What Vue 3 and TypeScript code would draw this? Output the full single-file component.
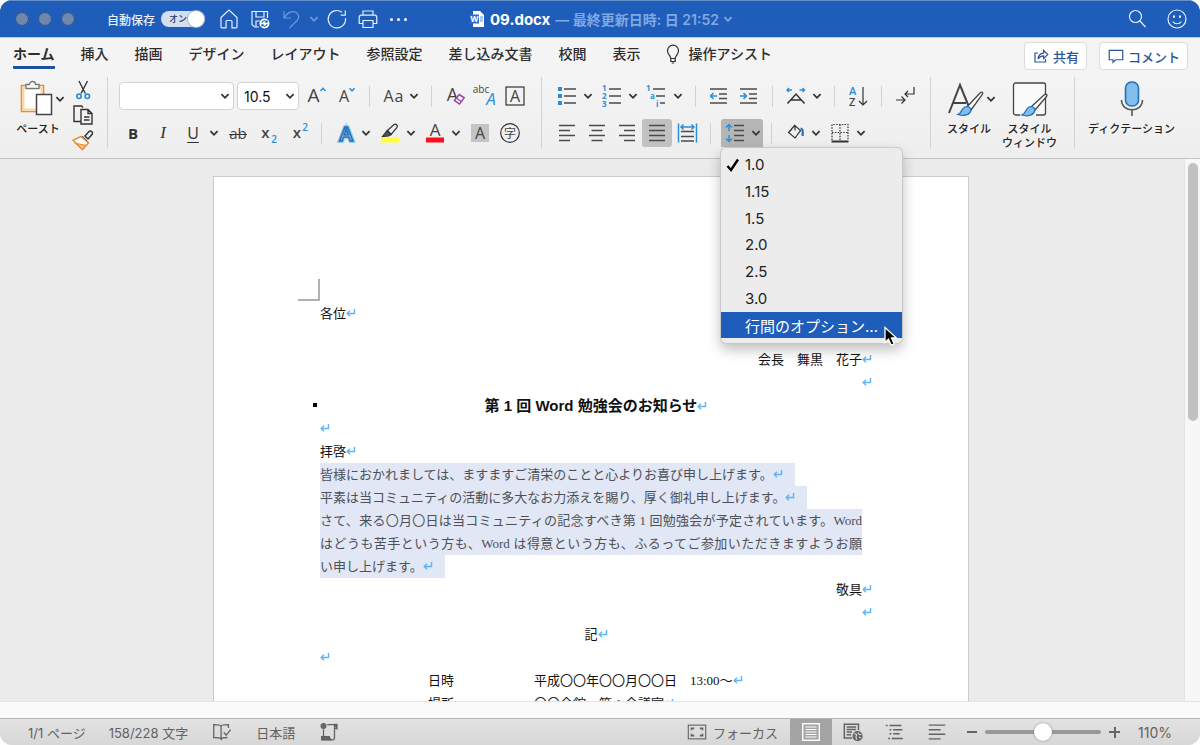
<script setup lang="ts">
import { h, ref } from 'vue'

const blue = '#2b8fd6'
const lines = (xs: [number, number, number][], color = '#4a4a4a') =>
  xs.map(([x1, x2, y]) => `<path d="M${x1} ${y}H${x2}" stroke="${color}" stroke-width="1.5"/>`).join('')
const letter = (t: string, x: number, y: number, size: number, extra = '') =>
  `<text x="${x}" y="${y}" font-size="${size}" text-anchor="middle" fill="#444" stroke="none" font-family="Open Sans, Noto Sans, sans-serif" ${extra}>${t}</text>`

const icons: Record<string, string> = {
  home: '<path d="M4 10.5 12 3l8 7.500V20a.8.8 0 0 1-.8.8H15V14.500a1 1 0 0 0-1-1h-4a1 1 0 0 0-1 1v6.300H4.800A.8.8 0 0 1 4 20Z"/>',
  save: '<path d="M11 20H6.500L4 17.500V4.500h15.500V11M8 4.500v5.500h8V4.500M8 20v-6h4"/><circle cx="16.500" cy="16.500" r="5" fill="#fff" stroke="none"/><path d="M13.800 15.800a2.800 2.800 0 0 1 5-.8m.3-1.500v1.800h-1.800M19.200 17.200a2.800 2.800 0 0 1-5 .8m-.3 1.500v-1.800h1.800" stroke="#1f5dba" stroke-width="1.100"/>',
  undo: '<path d="M5 4v7h7M5.500 10.500C9 4.500 15 3 18 6.200c2.300 2.500 2 5.300-.2 7.600L10.500 21"/>',
  redo: '<path d="M17 5.200A8.700 8.700 0 1 0 20.500 11M20.300 3.500v4.700h-4.600"/>',
  print: '<path d="M7 8V4h10v4M7 16.500H3.200V10.500a2.300 2.300 0 0 1 2.300-2.300h13a2.300 2.300 0 0 1 2.300 2.300v6H17M7 13.500h10v7H7Z"/>',
  search: '<circle cx="10.500" cy="9.500" r="6"/><path d="m15 14 5.500 6"/>',
  smile: '<circle cx="12" cy="12" r="9"/><path d="M7.800 14.500c1.800 3 6.600 3 8.400 0"/><path d="M9 8.500v2.200M15 8.500v2.200" stroke-width="2"/>',
  bulb: '<path d="M9.800 16.500c0-2.500-3.300-4-3.300-7.800a5.500 5.500 0 0 1 11 0c0 3.800-3.300 5.300-3.300 7.800ZM9.800 16.500v3h4.400v-3M10.800 21h2.400"/>',
  share: '<path d="M8 8H4v12h14v-4"/><path d="M8 16c.5-5 3-7.500 7.500-7.800V4.500L21 10l-5.500 5.500v-3.700C12 11.800 10 13 8 16Z"/>',
  comment: '<path d="M3 4.500h18v12.500h-9.500L8 20.500V17H3Z"/>',
  cut: `<path d="M8 3l6.300 12.500M16.500 3 10 15.500" stroke-width="1.400"/><g stroke="${blue}" stroke-width="1.700"><circle cx="8" cy="18.300" r="2.200"/><circle cx="16.300" cy="18.300" r="2.200"/></g>`,
  copy: '<path d="M9.500 18.500H3V3h7.500l1.500 1.500M10 6.500h7l4 4V21H10ZM17 6.500v4h4M13 14h5.500M13 17h5.500" stroke-width="1.400"/>',
  brush: '<path d="m11 8.500 6 6M14 8l4-4.500c1.500-1.500 4.500 1 3.200 2.800L17 11Z" stroke-width="1.500"/><path d="m10 8.500-8 3.800 9.500 9.200 6-6.500Z" fill="#fff" stroke="#e98b37" stroke-width="1.400"/><path d="m5 15.500 6.500 6 3.500-4Z" fill="#fbc97c" stroke="#e98b37"/>',
  grow: letter('A', 9.500, 18, 19) + `<path d="m16.500 7 2.500-2.700L21.500 7" stroke="${blue}" stroke-width="1.500"/>`,
  shrink: letter('A', 10, 18, 16) + `<path d="M15.500 4.200 18 6.800l2.500-2.600" stroke="${blue}" stroke-width="1.500"/>`,
  aa: letter('A', 7.500, 18, 16) + letter('a', 18, 18, 16),
  clear: letter('A', 9.500, 17, 18) + '<path d="m11.500 16.500 4.700-6 5 3.300-4.700 6.200Z" fill="#fff" stroke="#a23fb0" stroke-width="1.500"/><path d="m13.500 14 4.800 3.400" stroke="#a23fb0"/>',
  abc: letter('abc', 8, 9, 10) + `<text x="18" y="21" font-size="17" font-style="italic" text-anchor="middle" fill="${blue}" stroke="none" font-family="Open Sans, sans-serif">A</text>`,
  boxed: '<rect x="3" y="3" width="18" height="18"/>' + letter('A', 12, 18, 16),
  strike: letter('ab', 12, 18, 15) + '<path d="M3 13.500h18"/>',
  sub: letter('x', 9.500, 17, 15, 'font-weight="600"') + `<text x="18" y="21.500" font-size="10" font-weight="600" text-anchor="middle" fill="${blue}" stroke="none">2</text>`,
  sup: letter('x', 11, 17, 15, 'font-weight="600"') + `<text x="19" y="10" font-size="10" font-weight="600" text-anchor="middle" fill="${blue}" stroke="none">2</text>`,
  effect: '<text x="13" y="19.500" font-size="20" font-weight="600" text-anchor="middle" fill="#fff" stroke="#9bcdf0" stroke-width="4" font-family="Open Sans, sans-serif">A</text><text x="13" y="19.500" font-size="20" font-weight="600" text-anchor="middle" fill="#fff" stroke="#2372b9" stroke-width="1.700" font-family="Open Sans, sans-serif" aria-hidden="true">A</text>',
  marker: '<path d="M3 16.500h18v5H3Z" fill="#ffff3c" stroke="none"/><path d="m9.500 9.500 6.500-6c1.800-1.300 4.300.9 3 2.800l-6 7.200Z"/><path d="m9.300 9.500 3.700 4-2.500 1.500-6 .5Z" fill="#555"/>',
  color: letter('A', 12, 15, 17) + '<path d="M3 16.500h18v5H3Z" fill="#fb0d1b" stroke="none"/>',
  shade: '<path d="M3 3h18v18H3Z" fill="#c4c4c4" stroke="none"/>' + letter('A', 12, 18, 16),
  circled: '<circle cx="12" cy="12" r="9.300"/><text x="12" y="16.500" font-size="12" text-anchor="middle" fill="#444" stroke="none" font-family="Noto Sans CJK JP">字</text>',
  bullets: `<path d="M3 3h4v4H3ZM3 10h4v4H3ZM3 17h4v4H3Z" fill="${blue}" stroke="none"/>` + lines([[9, 21, 5], [9, 21, 12], [9, 21, 19]]),
  numbers: `<g fill="${blue}" stroke="none" font-size="8" font-weight="700" font-family="Open Sans, sans-serif"><text x="2" y="7">1</text><text x="2" y="15">2</text><text x="2" y="23">3</text></g>` + lines([[9, 21, 5], [9, 21, 12], [9, 21, 19]]),
  levels: `<g fill="${blue}" stroke="none" font-size="8" font-weight="700" font-family="Open Sans, sans-serif"><text x="1" y="7">1</text><text x="5" y="15">a</text><text x="11" y="23">i</text></g>` + lines([[8, 20, 5], [11, 20, 12], [15, 20, 19]]),
  outdent: lines([[3, 20, 5], [12, 20, 10], [12, 20, 14.500], [3, 20, 19]]) + `<path d="M10 12H4m2.500-3-3 3 3 3" stroke="${blue}" stroke-width="1.500"/>`,
  indent: lines([[3, 20, 5], [12, 20, 10], [12, 20, 14.500], [3, 20, 19]]) + `<path d="M3 12h6M6.500 9l3 3-3 3" stroke="${blue}" stroke-width="1.500"/>`,
  cjk: `<path d="m3.500 19.500 8.500-9.500 8.500 9.500M7 16h10" stroke-width="1.500"/><path d="M3 6h5M5 4 3 6l2 2M15.500 6h5m-2-2 2 2-2 2" stroke="${blue}" stroke-width="1.400"/>`,
  sort: `<text x="3" y="11" font-size="11" font-weight="600" fill="${blue}" stroke="none" font-family="Open Sans, sans-serif">A</text><text x="3" y="22" font-size="11" font-weight="600" fill="#444" stroke="none" font-family="Open Sans, sans-serif">Z</text><path d="M17 3v18m-4-4 4 4 4-4"/>`,
  marks: '<path d="M21 3v7h-9m3-3-3 3 3 3M3 16h9m-3.500-3.500L12 16l-3.500 3.500"/>',
  left: lines([[4, 20, 4.500], [4, 15, 9.500], [4, 20, 14.500], [4, 15, 19.500]]),
  center: lines([[4, 20, 4.500], [6.500, 17.500, 9.500], [4, 20, 14.500], [6.500, 17.500, 19.500]]),
  right: lines([[4, 20, 4.500], [9, 20, 9.500], [4, 20, 14.500], [9, 20, 19.500]]),
  justify: lines([[4, 20, 4.500], [4, 20, 9.500], [4, 20, 14.500], [4, 20, 19.500]]),
  distribute: lines([[6, 19, 10.500], [6, 19, 15.500], [6, 19, 20]]) + `<path d="M3.500 2.500v19M21.500 2.500v19M6 6h13M8.500 3.500 6 6l2.500 2.500m8-5L19 6l-2.500 2.500" stroke="${blue}" stroke-width="1.500"/>`,
  spacing: lines([[11, 21, 4.500], [11, 21, 9.500], [11, 21, 14.500], [11, 21, 19.500]]) + `<path d="M6 4v6M3 6.500 6 3.500l3 3M6 14v6m-3-2.500 3 3 3-3" stroke="${blue}" stroke-width="1.500"/>`,
  bucket: '<path d="m12 4-6.500 7.500 6.500 5.500 5.500-7.500L12 4.500v5M5.500 11.500 9 8"/><path d="M17.500 7.500c2.500 0 2.300 2.500 2.200 7.500" stroke="#2372b9" stroke-width="2.200"/>',
  borders: '<path d="M4 19V3.500h16V19M12 3.500V20M4 11.500h16" stroke-dasharray="1.500 1.300"/><path d="M3.500 20.500h17" stroke-width="2"/>',
  proof: '<path d="M11 19.500V5.500C10 4 8 4 3 4v14c5 0 7 0 8 1.500ZM11 5.500c1-1.500 3-1.500 8-1.500v3.500M11 19.500c1-1.300 3-1.500 7-1.500M14 12.500l2.500 3 5-6" stroke-width="1.400"/>',
  macro: '<circle cx="6" cy="5.500" r="3.300" fill="#666" stroke="none"/><path d="M10 4h10.500v4H18M18 4v14c0 2-1 2.500-2 2.500H4V17h8c0 2 1 3.500 3 3.500M6 9v8" stroke-width="1.400"/><path d="M4 17h8l2 3.500H4ZM18 3.500h2.500V8Z" fill="#666"/>',
  focus: '<rect x="2.500" y="4.500" width="19" height="15"/><path d="M6 10V8h3M15 8h3v2M18 14v2h-3M9 16H6v-2" stroke-width="1.800"/>',
  printView: '<rect x="3" y="3" width="18" height="18" stroke="#fff" stroke-width="1.500"/><path d="M6 6.500h12M6 9.200h12M6 12h12M6 14.800h12M6 17.500h12" stroke="#fff"/>',
  webView: '<path d="M11 18.500H2.500V3.500H18V10M5 6.500h10.500M5 9.200h10.500M5 12h6M5 15h5" stroke-width="1.600"/><circle cx="17" cy="16.500" r="5.500" fill="#666" stroke="none"/><path d="M13.500 14c2 0 3 1 2 2.500s1 2 0 4M17.500 12.500l1 2 2.500.5M18.500 17.500l2 1" stroke="#ddd"/>',
  outline: '<path d="M2 5h2M6 5h13M6 9.500h2M10 9.500h10M6 14h2M10 14h7M4.500 19h2M8.500 19h12" stroke-width="1.600"/>',
  draft: '<path d="M3 4.500h18M3 9.500h13M3 14.500h18M3 19.500h13" stroke-width="1.600"/>',
}

const Icon = (props: { name: string }) =>
  h('svg', {
    class: 'icon', viewBox: '0 0 24 24', 'aria-hidden': 'true', fill: 'none',
    stroke: 'currentColor', 'stroke-width': '1.2', innerHTML: icons[props.name],
  })
Icon.props = ['name']

const Chev = () =>
  h('svg', { class: 'chev', viewBox: '0 0 10 10', fill: 'none', stroke: 'currentColor', 'stroke-width': '1.5', 'aria-hidden': 'true' },
    [h('path', { d: 'M2 3.500 5 6.500 8 3.500' })])

const Ret = () =>
  h('span', { class: 'ret' }, [
    h('svg', { viewBox: '0 0 10 10', fill: 'none', stroke: '#5fb3f8', 'stroke-width': '1.4', 'aria-hidden': 'true' },
      [h('path', { d: 'M8.500 1v4.500H1M4 2.800 1.200 5.500 4 8.200' })]),
  ])

const autosave = ref(true)
const zoom = ref(50)
const tabs = ['ホーム', '挿入', '描画', 'デザイン', 'レイアウト', '参照設定', '差し込み文書', '校閲', '表示']
const spacings = ['1.0', '1.15', '1.5', '2.0', '2.5', '3.0']
const current = ref('1.0')

type Tool = { icon?: string; label?: string; menu?: boolean; sep?: boolean; text?: string; on?: boolean }
const fontTop: Tool[] = [
  { icon: 'grow', label: 'フォント サイズの拡大' }, { icon: 'shrink', label: 'フォント サイズの縮小' }, { sep: true },
  { icon: 'aa', label: '文字種の変換', menu: true }, { sep: true },
  { icon: 'clear', label: '書式のクリア' }, { icon: 'abc', label: 'ルビ' }, { icon: 'boxed', label: '囲み線' },
]
const fontBottom: Tool[] = [
  { text: 'B', label: '太字' }, { text: 'I', label: '斜体' }, { text: 'U', label: '下線', menu: true },
  { icon: 'strike', label: '取り消し線' }, { icon: 'sub', label: '下付き' }, { icon: 'sup', label: '上付き' }, { sep: true },
  { icon: 'effect', label: '文字の効果', menu: true }, { icon: 'marker', label: '蛍光ペン', menu: true },
  { icon: 'color', label: 'フォントの色', menu: true }, { icon: 'shade', label: '文字の網かけ' }, { icon: 'circled', label: '囲い文字' },
]
const paraTop: Tool[] = [
  { icon: 'bullets', label: '箇条書き', menu: true }, { icon: 'numbers', label: '段落番号', menu: true },
  { icon: 'levels', label: 'アウトライン', menu: true }, { sep: true },
  { icon: 'outdent', label: 'インデント解除' }, { icon: 'indent', label: 'インデント' }, { sep: true },
  { icon: 'cjk', label: '拡張書式', menu: true }, { sep: true }, { icon: 'sort', label: '並べ替え' }, { sep: true },
  { icon: 'marks', label: '編集記号' },
]
const paraBottom: Tool[] = [
  { icon: 'left', label: '左揃え' }, { icon: 'center', label: '中央揃え' }, { icon: 'right', label: '右揃え' },
  { icon: 'justify', label: '両端揃え', on: true }, { icon: 'distribute', label: '均等割り付け' }, { sep: true },
]
const paraEnd: Tool[] = [
  { sep: true }, { icon: 'bucket', label: '塗りつぶし', menu: true }, { icon: 'borders', label: '罫線', menu: true },
]

const Tools = (props: { items: Tool[] }) =>
  props.items.flatMap((t) => {
    if (t.sep) return [h('span', { class: 'sep' })]
    const out = [h('button', { class: ['tool', t.on && 'on', t.text && 'txt-' + t.text], 'aria-label': t.label, type: 'button' },
      t.text ? t.text : [h(Icon, { name: t.icon as string })])]
    if (t.menu) out.push(h('button', { class: 'drop', type: 'button', 'aria-label': t.label + 'のメニュー' }, [h(Chev)]))
    return out
  })
Tools.props = ['items']
</script>

<template>
  <div class="window">
    <header class="titlebar">
      <div class="side">
        <span class="lights"><i></i><i></i><i></i></span>
        <label class="autosave">自動保存
          <span class="switch"><input v-model="autosave" type="checkbox" /><span>オン</span></span>
        </label>
        <div class="quick">
          <button type="button" aria-label="ホーム"><Icon name="home" /></button>
          <button type="button" aria-label="保存"><Icon name="save" /></button>
          <button type="button" aria-label="元に戻す" class="dim"><Icon name="undo" /></button>
          <button type="button" aria-label="履歴" class="dim narrow"><Chev /></button>
          <button type="button" aria-label="やり直し"><Icon name="redo" /></button>
          <button type="button" aria-label="印刷"><Icon name="print" /></button>
          <button type="button" aria-label="その他" class="dots"><i></i><i></i><i></i></button>
        </div>
      </div>
      <div class="doc-title">
        <svg class="doc-icon" viewBox="0 0 16 18" aria-hidden="true">
          <path d="M4 1h7l4 4v12H4Z" fill="#fff" />
          <path d="M11 7h3M11 9h3M11 11h3" stroke="#5b9be0" />
          <path d="M1 4.500h9v9H1Z" fill="#2d6bc4" />
          <text x="5.500" y="12" text-anchor="middle" font-size="8" font-weight="700" fill="#fff">W</text>
        </svg>
        <strong>09.docx</strong><span class="edited">— 最終更新日時: 日 21:52</span><Chev />
      </div>
      <div class="side end">
        <button type="button" aria-label="検索"><Icon name="search" /></button>
        <button type="button" aria-label="フィードバック"><Icon name="smile" /></button>
      </div>
    </header>

    <nav class="tabs">
      <a v-for="(t, i) in tabs" :key="t" href="#" :class="{ active: i === 0 }">{{ t }}</a>
      <a href="#" class="assist"><Icon name="bulb" />操作アシスト</a>
      <div class="actions">
        <button type="button"><Icon name="share" />共有</button>
        <button type="button"><Icon name="comment" />コメント</button>
      </div>
    </nav>

    <section class="ribbon">
      <div class="group clip">
        <button type="button" class="big">
          <span class="face">
            <svg width="38" height="38" viewBox="0 0 38 38" fill="none" aria-hidden="true">
              <path d="M2.500 5.500h22v26h-22Z" fill="#fff" stroke="#e98b37" stroke-width="1.600" />
              <path d="M4.500 7.500h18v22h-18Z" stroke="#fbd79b" stroke-width="2" />
              <path d="M7 8.500V4.500h3.500a3 3 0 0 1 6 0H20v4Z" fill="#fff" stroke="#777" stroke-width="1.300" />
              <path d="M17.500 14.500h15v20h-15Z" fill="#fff" stroke="#444" stroke-width="1.500" />
            </svg>
          </span>
          ペースト
        </button>
        <button type="button" class="drop tall" aria-label="貼り付けのオプション"><Chev /></button>
        <div class="stack">
          <button type="button" aria-label="切り取り"><Icon name="cut" /></button>
          <button type="button" aria-label="コピー"><Icon name="copy" /></button>
          <button type="button" aria-label="書式のコピー"><Icon name="brush" /></button>
        </div>
      </div>

      <div class="group rows font">
        <div class="row">
          <span class="pick name"><select aria-label="フォント"><option></option></select><Chev /></span>
          <span class="pick size"><select aria-label="フォント サイズ"><option>10.5</option></select><Chev /></span>
          <Tools :items="fontTop" />
        </div>
        <div class="row"><Tools :items="fontBottom" /></div>
      </div>

      <div class="group rows para">
        <div class="row"><Tools :items="paraTop" /></div>
        <div class="row">
          <Tools :items="paraBottom" />
          <div class="spacing">
            <button type="button" class="spacing-button" aria-label="行間"><Icon name="spacing" /><Chev /></button>
            <div class="menu" role="menu">
              <button v-for="s in spacings" :key="s" type="button" role="menuitem" @click="current = s">
                <span class="tick"><svg v-if="s === current" width="14" height="14" viewBox="0 0 14 14" fill="none" stroke="#000" stroke-width="2.400" aria-hidden="true"><path d="M1.500 8 5 12 12 1.500" /></svg></span>{{ s }}
              </button>
              <button type="button" role="menuitem" class="hot"><span class="tick"></span>行間のオプション…</button>
              <svg class="pointer" width="16" height="22" viewBox="0 0 16 22" aria-hidden="true">
                <path d="M2 1.500v15l3.500-3.300 2.700 6 3-1.300-2.700-5.900H13.500Z" fill="#000" stroke="#fff" stroke-width="1.300" />
              </svg>
            </div>
          </div>
          <Tools :items="paraEnd" />
        </div>
      </div>

      <div class="group styles">
        <button type="button" class="big">
          <span class="face">
            <svg width="44" height="38" viewBox="0 0 44 38" fill="none" aria-hidden="true">
              <path d="M2 33 13 5l9 22M6 23h13" stroke="#444" stroke-width="2" />
              <path d="m20 27 13-14c2-1.800 3.500-.5 2.300 1.500L24 30Z" fill="#fff" stroke="#444" stroke-width="1.300" />
              <path d="M24 30c-1 5-7 6.500-13 4.500 4-1 3-6 7-7.500 3-1 5.500 0 6 3Z" fill="#83bdeb" stroke="#2372b9" stroke-width="1.300" />
            </svg>
          </span>
          スタイル
        </button>
        <button type="button" class="drop tall" aria-label="スタイルの一覧"><Chev /></button>
        <button type="button" class="big">
          <span class="face">
            <svg width="38" height="38" viewBox="0 0 38 38" fill="none" aria-hidden="true">
              <path d="M9 35H4.500a2 2 0 0 1-2-2V5a2 2 0 0 1 2-2h28a2 2 0 0 1 2 2v28a2 2 0 0 1-2 2H25" fill="#fafafa" stroke="#444" stroke-width="1.300" />
              <path d="m20 27 13-12c2-1.500 4-.3 2.500 1.500L24 30Z" fill="#fff" stroke="#444" stroke-width="1.300" />
              <path d="M24 30c-1 5-7 7-13 5 4-1 3-6 7-8 3-1 5.500 0 6 3Z" fill="#83bdeb" stroke="#2372b9" stroke-width="1.300" />
            </svg>
          </span>
          スタイル<br />ウィンドウ
        </button>
      </div>

      <div class="group dictate">
        <button type="button" class="big">
          <span class="face">
            <svg width="30" height="38" viewBox="0 0 30 38" fill="none" aria-hidden="true">
              <rect x="8.500" y="2" width="13" height="24" rx="6" fill="#83bdeb" stroke="#2372b9" stroke-width="1.600" />
              <path d="M4.500 20c0 13 21 13 21 0M15 29.500V36" stroke="#555" stroke-width="1.600" />
            </svg>
          </span>
          ディクテーション
        </button>
      </div>
    </section>

    <main class="canvas">
      <div class="view">
        <article class="page">
          <div class="corner"></div>
          <p>各位<Ret /></p>
          <p></p>
          <p class="r">会長　舞黒　花子<Ret /></p>
          <p class="r"><Ret /></p>
          <h1>第 1 回 Word 勉強会のお知らせ<Ret /></h1>
          <p><Ret /></p>
          <p>拝啓<Ret /></p>
          <p class="sel">皆様におかれましては、ますますご清栄のことと心よりお喜び申し上げます。<Ret /></p>
          <p class="sel">平素は当コミュニティの活動に多大なお力添えを賜り、厚く御礼申し上げます。<Ret /></p>
          <p class="sel full">さて、来る〇月〇日は当コミュニティの記念すべき第 1 回勉強会が予定されています。Word</p>
          <p class="sel full">はどうも苦手という方も、Word は得意という方も、ふるってご参加いただきますようお願</p>
          <p class="sel">い申し上げます。<Ret /></p>
          <p class="r">敬具<Ret /></p>
          <p class="r low"><Ret /></p>
          <p class="c">記<Ret /></p>
          <p><Ret /></p>
          <p class="item"><span>日時</span>平成〇〇年〇〇月〇〇日　13:00～<Ret /></p>
          <p class="item"><span>場所</span>〇〇会館　第 1 会議室<Ret /></p>
        </article>
      </div>
      <div class="scroll"><span></span></div>
    </main>
    <div class="hscroll"></div>

    <footer class="status">
      <span>1/1 ページ</span>
      <span>158/228 文字</span>
      <button type="button" aria-label="文章校正"><Icon name="proof" /></button>
      <span>日本語</span>
      <button type="button" aria-label="マクロ"><Icon name="macro" /></button>
      <div class="right">
        <button type="button" class="focus"><Icon name="focus" />フォーカス</button>
        <button type="button" class="view-mode picked" aria-label="印刷レイアウト"><Icon name="printView" /></button>
        <button type="button" class="view-mode" aria-label="Web レイアウト"><Icon name="webView" /></button>
        <button type="button" class="view-mode" aria-label="アウトライン"><Icon name="outline" /></button>
        <button type="button" class="view-mode" aria-label="下書き"><Icon name="draft" /></button>
        <button type="button" class="step minus" aria-label="縮小"></button>
        <input v-model="zoom" type="range" aria-label="ズーム" />
        <button type="button" class="step plus" aria-label="拡大"></button>
        <span class="percent">110%</span>
      </div>
    </footer>
  </div>
</template>

<style>
body { background: #fff; }
button, select, input { font: inherit; color: inherit; margin: 0; }
button { border: 0; padding: 0; background: none; display: inline-flex; align-items: center; justify-content: center; white-space: nowrap; }
.icon { width: 24px; height: 24px; flex: none; display: block; overflow: visible; font-weight: 400; }
.chev { width: 12px; height: 12px; flex: none; display: block; }
.ret { display: inline-block; width: 0; white-space: nowrap; }
.ret svg { width: 10px; height: 10px; overflow: visible; }
.tool { width: 30px; height: 28px; flex: none; font: 700 15px "Open Sans", sans-serif; }
.tool.on { background: #c1c1c1; border-radius: 3px; }
.tool.txt-I { font: italic 400 17px "Liberation Serif", serif; }
.tool.txt-U { font-size: 16px; font-weight: 400; text-decoration: underline; text-underline-offset: 3px; }
.drop { width: 15px; height: 28px; flex: none; justify-content: flex-start; }
.sep { width: 1px; height: 21px; margin: 0 8px; flex: none; background: #d2d2d2; }
</style>

<style scoped>
.window {
  height: 100vh;
  display: flex;
  flex-direction: column;
  overflow: hidden;
  border-radius: 12px;
  background: #ebebeb;
  color: #333;
  font-family: Inter, "Noto Sans CJK JP", sans-serif;
  font-size: 14px;
}
.titlebar {
  height: 38px;
  flex: none;
  box-sizing: border-box;
  border-top: 1px solid #6590cb;
  border-bottom: 1px solid #b5cdf0;
  background: #1f5dba;
  color: #e6effb;
  display: flex;
  align-items: center;
}
.side { flex: 1 1 0; display: flex; align-items: center; }
.side.end { justify-content: flex-end; gap: 16px; padding-right: 11px; }
.lights { display: flex; gap: 9px; padding: 0 32px 0 15px; }
.lights i { width: 14px; height: 14px; border-radius: 50%; background: #6f86ad; box-shadow: 0 0 0 1px #2b528f inset; }
.autosave { display: flex; align-items: center; gap: 6px; font-size: 12px; font-weight: 500; white-space: nowrap; }
.switch { display: flex; width: 44px; height: 16px; position: relative; border-radius: 8px; background: #d3def0; color: #24406e; }
.switch span { font-size: 9px; line-height: 16px; padding-left: 8px; }
.switch input { appearance: none; position: absolute; right: 1px; top: 0; width: 16px; height: 16px; border-radius: 50%; background: #fff; box-shadow: 0 0 1px 1px #a9b5c9; }
.quick { display: flex; padding-left: 8px; }
.quick button { width: 31px; height: 24px; flex: none; }
.quick button.narrow { width: 15px; }
.quick .dim { color: #6d98d9; }
.quick button.dots { gap: 4px; }
.dots i { width: 3px; height: 3px; border-radius: 50%; background: #fff; }
.doc-title { display: flex; align-items: center; white-space: nowrap; font-weight: 600; padding-left: 14px; }
.doc-icon { width: 16px; height: 18px; margin-right: 5px; }
.doc-title strong { font-weight: 700; color: #fff; margin-right: 5px; font-size: 15px; }
.edited, .doc-title .chev { color: #80a9e2; }
.doc-title .chev { margin-left: 3px; }

.tabs {
  height: 37px;
  flex: none;
  display: flex;
  align-items: flex-start;
  gap: 26px;
  padding-left: 13px;
  background: #f5f4f4;
  font-weight: 500;
}
.tabs a { color: #2d2d2d; text-decoration: none; white-space: nowrap; height: 28px; line-height: 32px; border-bottom: 3px solid transparent; border-radius: 1px; }
.tabs a.active { font-weight: 700; border-color: #1f519b; }
.tabs .assist { display: flex; gap: 4px; margin-left: -6px; }
.assist .icon { margin-top: 4px; }
.actions { margin-left: auto; display: flex; gap: 12px; padding: 4px 12px 0 0; color: #2a549a; font-size: 13px; }
.actions button { height: 28px; padding: 0 7px; gap: 3px; border: 1px solid #dcdcdc; border-radius: 4px; background: #fff; font-weight: 500; }
.actions .icon { width: 18px; height: 18px; stroke-width: 1.600; }

.ribbon {
  flex: none;
  display: flex;
  height: 84px;
  box-sizing: border-box;
  padding: 2px 0 10px;
  border-bottom: 1px solid #c3c3c3;
  background: linear-gradient(#f4f4f4, #eeeeee);
  position: relative;
  z-index: 1;
}
.group { flex: none; display: flex; align-items: flex-start; box-sizing: border-box; border-right: 1px solid #d2d2d2; }
.rows { display: flex; flex-direction: column; gap: 9px; padding-top: 5px; }
.row { display: flex; align-items: center; height: 28px; }
.clip { width: 108px; padding-left: 16px; }
.font { width: 434px; padding-left: 10px; }
.para { width: 389px; padding-left: 10px; }
.styles { width: 144px; padding-left: 16px; }
.dictate { border-right: 0; padding-left: 13px; }
.big { display: flex; flex-direction: column; min-width: 44px; font-size: 11px; line-height: 14px; color: #222; font-weight: 500; }
.face { height: 38px; display: flex; margin: 3px 0 4px; }
.big + .drop { margin-left: -6px; }
.styles .drop + .big { margin-left: 2px; }
.tall { height: 44px; }
.stack { display: flex; flex-direction: column; gap: 5px; padding: 3px 0 0 6px; }
.stack button { width: 16px; height: 20px; }
.pick { display: inline-flex; align-items: center; position: relative; height: 28px; flex: none; }
.pick select { appearance: none; width: 100%; height: 28px; padding: 0 18px 0 6px; border: 1px solid #d3d3d3; border-radius: 4px; background: #fff; color: #111; font-size: 14px; }
.pick .chev { position: absolute; right: 3px; }
.name { width: 115px; margin: 0 3px 0 1px; }
.size { width: 62px; margin-right: 2px; }

.spacing { position: relative; margin-left: 2px; }
.spacing-button { width: 42px; height: 28px; background: #b5b5b5; border-radius: 3px 3px 0 0; gap: 3px; }
.menu {
  position: absolute;
  top: 100%;
  left: 0;
  width: 181px;
  height: 195px;
  display: grid;
  grid-auto-rows: 1fr;
  box-sizing: border-box;
  padding: 4px 0;
  border-radius: 5px;
  background: #ececec;
  box-shadow: 0 0 0 1px #c9c9c9, 0 6px 14px rgba(0, 0, 0, 0.28);
  color: #222;
  font-size: 15px;
}
.menu button { display: flex; justify-content: flex-start; width: 100%; }
.menu button.hot { background: #1f5dba; color: #fff; }
.tick { width: 19px; padding-left: 5px; display: flex; }
.pointer { position: absolute; right: 3px; bottom: -5px; }

.canvas { flex: 1 1 0; min-height: 0; display: flex; overflow: hidden; }
.view { flex: 1; padding: 17px 2px 0 0; overflow: hidden; }
.page {
  box-sizing: border-box;
  max-width: 756px;
  margin: 0 auto;
  padding: 102px 106px 0;
  border: 1px solid #cbcbcb;
  background: #fff;
  color: #111;
  font: 13px/23px "Liberation Serif", "Noto Sans CJK JP", serif;
}
.corner { width: 20px; height: 20px; margin: 0 0 1px -22px; border: solid #b0b0b0; border-width: 0 2px 2px 0; }
.page p { margin: 0; height: 23px; white-space: nowrap; }
.page .r { text-align: right; }
.page .c { text-align: center; }
.page .low { height: 22px; }
.page h1 { position: relative; margin: 0; text-align: center; font: 700 15px/23px "Liberation Sans", "Noto Sans CJK JP", sans-serif; }
.page h1::before { content: ""; position: absolute; left: -7px; top: 9px; width: 4px; height: 4px; background: #000; }
.page .sel { width: fit-content; padding-right: 22px; background: #e1e7f4; color: #4d5058; }
.page .sel.full { width: auto; padding: 0; text-align-last: justify; }
.page .item { padding-left: 108px; display: flex; }
.item > span:first-child { width: 106px; }
.scroll { width: 16px; background: #f7f7f7; border-left: 1px solid #e4e4e4; box-sizing: border-box; padding-top: 4px; }
.scroll span { display: block; width: 10px; height: 48%; margin: 0 auto; border-radius: 5px; background: #c1c1c1; }
.hscroll { height: 17px; flex: none; background: #fafafa; border-top: 1px solid #e4e4e4; box-sizing: border-box; }

.status {
  height: 27px;
  flex: none;
  box-sizing: border-box;
  display: flex;
  align-items: center;
  gap: 23px;
  padding-left: 28px;
  border-top: 1px solid #b4b4b4;
  background: linear-gradient(#e2e2e2, #d7d7d7);
  color: #626262;
  font-size: 13px;
  white-space: nowrap;
}
.status .icon { width: 22px; height: 22px; }
.right { margin-left: auto; display: flex; align-items: center; height: 100%; padding-right: 28px; }
.focus { gap: 5px; margin-right: 12px; }
.view-mode { width: 42px; height: 26px; }
.picked { background: #a4a4a4; }
.step { width: 11px; height: 11px; flex: none; }
.minus { background: linear-gradient(#666, #666) center / 10px 2px no-repeat; margin-left: 8px; }
.plus { background: linear-gradient(#666, #666) center / 11px 2px no-repeat, linear-gradient(#666, #666) center / 2px 11px no-repeat; }
.right input { appearance: none; width: 116px; height: 4px; margin: 0 8px; border-radius: 2px; background: #999; }
.right input::-webkit-slider-thumb { appearance: none; width: 18px; height: 18px; border-radius: 50%; background: #fff; box-shadow: 0 0 2px #777; }
.percent { margin-left: 18px; font-size: 14px; }
</style>
